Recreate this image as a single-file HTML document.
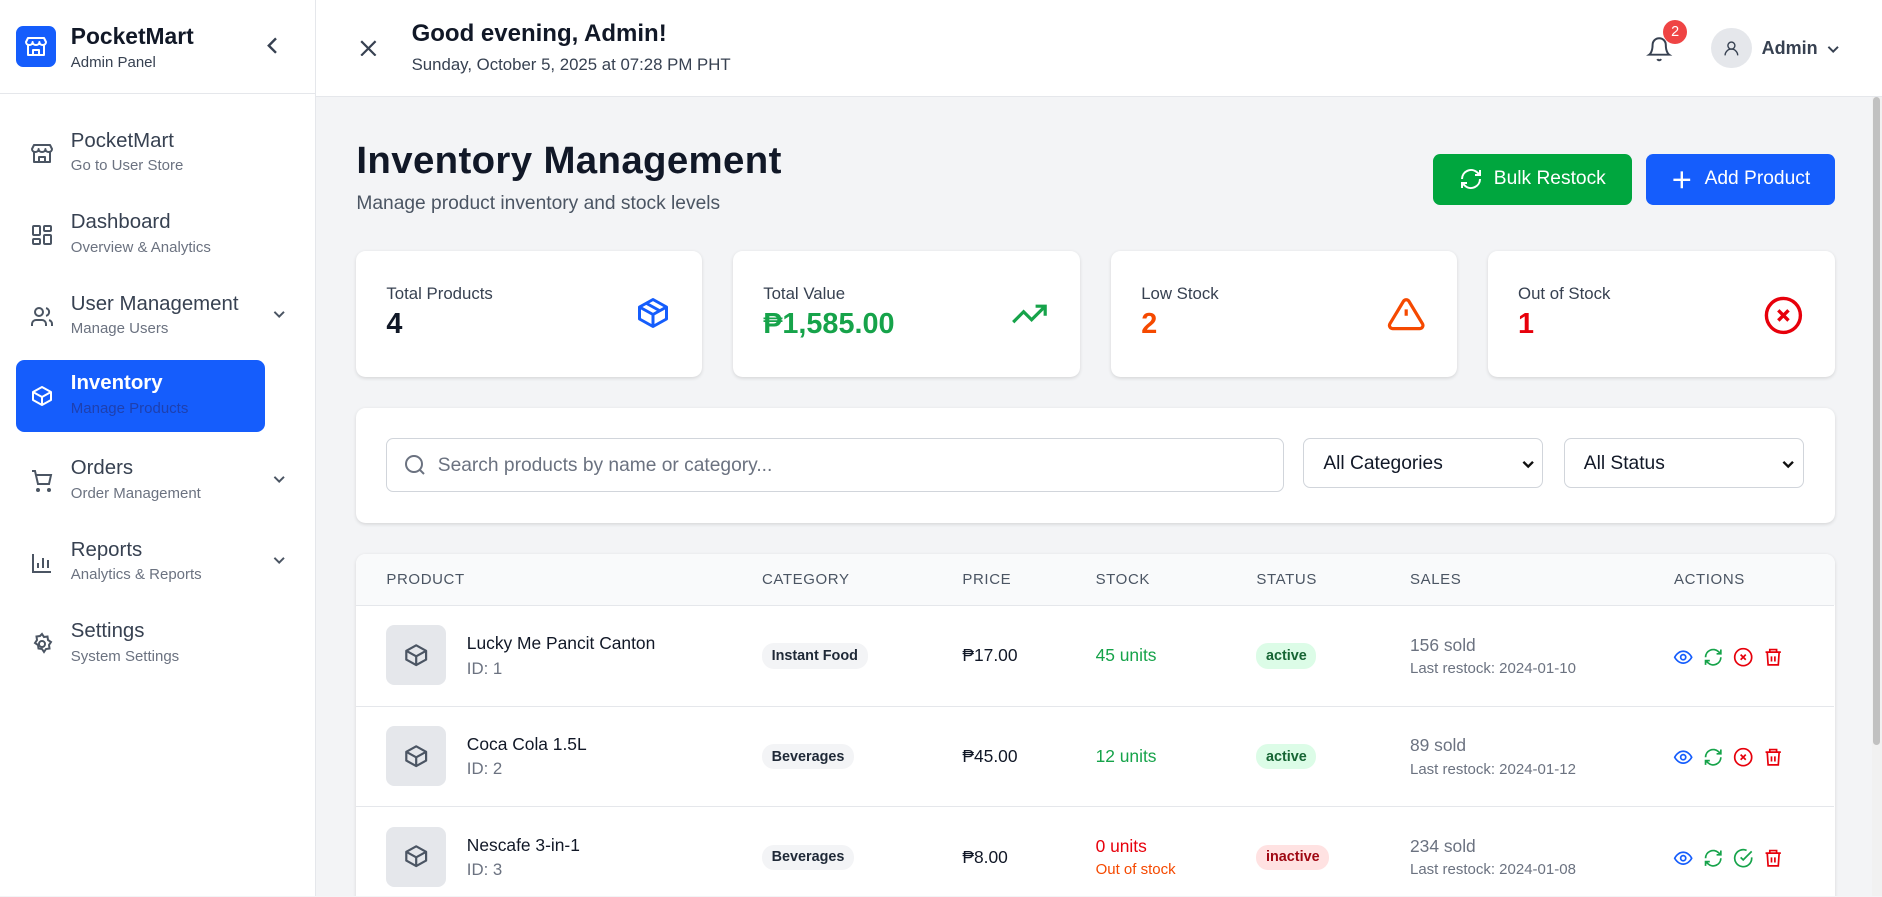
<!DOCTYPE html>
<html><head><meta charset="utf-8"><style>
*{box-sizing:border-box;margin:0;padding:0}
html,body{width:1882px;height:897px;overflow:hidden}
body{font-family:"Liberation Sans",sans-serif;background:#f3f4f6;color:#111827}
#z{zoom:1.2;width:1568px;height:747px;position:relative;overflow:hidden}
.sb{position:absolute;left:0;top:0;width:263px;height:747px;background:#fff;border-right:1px solid #e5e7eb}
.logo{height:78px;border-bottom:1px solid #e5e7eb;position:relative}
.lbox{position:absolute;left:13px;top:22px;width:34px;height:34px;background:#155dfc;border-radius:6px;display:flex;align-items:center;justify-content:center}
.nav{position:absolute;left:13px;width:208px;height:60px;border-radius:7px}
.nav svg{position:absolute;left:12px;top:20px}
.nav .t{position:absolute;left:46px;top:10px;font-size:17px;color:#374151}
.nav .s{position:absolute;left:46px;top:33px;font-size:12.5px;color:#6b7280}
.nav .c{position:absolute;left:214px;top:24px}
.hd{position:absolute;left:263px;top:0;right:0;height:81px;background:#fff;border-bottom:1px solid #e5e7eb}
.card{position:absolute;background:#fff;border-radius:8px;box-shadow:0 1px 3px rgba(0,0,0,.12);}
.sc .l{position:absolute;left:25px;top:28px;font-size:14px;color:#374151}
.sc .v{position:absolute;left:25px;top:48px;font-size:24px;font-weight:bold}
.sc svg{position:absolute;right:26px;top:37px}
.sel{position:absolute;top:25px;height:42px;width:200px;border:1px solid #d1d5db;border-radius:6px;font-size:16px;padding:12px 16px;color:#111827}
.sel svg{position:absolute;right:6px;top:15px}
.row{position:absolute;left:0;width:1231px;height:84px;border-top:1px solid #e5e7eb}
.row>*{position:absolute}
.pi{left:25px;top:16px;width:50px;height:50px;background:#e5e7eb;border-radius:7px;display:flex;align-items:center;justify-content:center}
.pn{left:92px;top:23px;font-size:14.5px}
.pid{left:92px;top:44px;font-size:14px;color:#6b7280}
.cat{left:338px;top:31px;background:#f3f4f6;border-radius:10px;font-size:12px;font-weight:bold;padding:4px 8px;color:#1f2937}
.pr{left:505px;top:33px;font-size:14.5px}
.st{left:616px;top:33px;font-size:14.5px;color:#16a34a}
.bd{left:750px;top:31px;font-size:12px;font-weight:bold;padding:4px 8px;border-radius:10px;background:#dcfce7;color:#166534}
.sl{left:878px;top:24px;font-size:14.5px;color:#6b7280}
.lr{left:878px;top:45px;font-size:12.5px;color:#6b7280}
.ac{left:1097px;top:34px;display:flex;gap:8px}
.th{position:absolute;top:14px;font-size:12.5px;color:#4b5563;letter-spacing:.5px}
</style></head><body><div id="z">
<div class="sb">
 <div class="logo">
  <div class="lbox"><svg width="20" height="20" viewBox="0 0 24 24" fill="none" stroke="#fff" stroke-width="2" stroke-linecap="round" stroke-linejoin="round"><path d="M4 10v10h16V10"/><path d="M2 7l2-4h16l2 4c0 2-1.5 3-3.3 3S15.4 9 15.4 7c0 2-1.5 3-3.4 3S8.6 9 8.6 7c0 2-1.5 3-3.300 3S2 9 2 7z"/><path d="M9 20v-5h6v5"/></svg></div>
  <div style="position:absolute;left:59px;top:19px;font-size:19px;font-weight:bold">PocketMart</div>
  <div style="position:absolute;left:59px;top:45px;font-size:12.5px;color:#374151">Admin Panel</div>
  <svg style="position:absolute;left:220px;top:30px" width="14" height="16" viewBox="0 0 14 16" fill="none" stroke="#374151" stroke-width="2"><path d="M10 2L4 8l6 6"/></svg>
 </div>
 <div class="nav" style="top:98px"><svg width="20" height="20" viewBox="0 0 24 24" fill="none" stroke="#4b5563" stroke-width="2" stroke-linejoin="round"><path d="M4 10v10h16V10"/><path d="M2 7l2-4h16l2 4c0 2-1.5 3-3.3 3S15.4 9 15.4 7c0 2-1.5 3-3.4 3S8.6 9 8.6 7c0 2-1.5 3-3.3 3S2 9 2 7z"/><path d="M9 20v-5h6v5"/></svg><div class="t">PocketMart</div><div class="s">Go to User Store</div></div>
 <div class="nav" style="top:166px"><svg width="20" height="20" viewBox="0 0 24 24" fill="none" stroke="#4b5563" stroke-width="2"><rect x="3" y="3" width="7" height="9" rx="1"/><rect x="14" y="3" width="7" height="5" rx="1"/><rect x="14" y="12" width="7" height="9" rx="1"/><rect x="3" y="16" width="7" height="5" rx="1"/></svg><div class="t">Dashboard</div><div class="s">Overview &amp; Analytics</div></div>
 <div class="nav" style="top:234px"><svg width="20" height="20" viewBox="0 0 24 24" fill="none" stroke="#4b5563" stroke-width="2"><circle cx="9" cy="7" r="4"/><path d="M2 21v-2a4 4 0 014-4h6a4 4 0 014 4v2M16 3.1a4 4 0 010 7.8M22 21v-2a4 4 0 00-3-3.9"/></svg><div class="t">User Management</div><div class="s">Manage Users</div><svg class="c" width="12" height="12" viewBox="0 0 12 12" fill="none" stroke="#4b5563" stroke-width="1.6" style="left:214px;top:22px"><path d="M2 4l4 4 4-4"/></svg></div>
 <div class="nav" style="top:300px;background:#155dfc"><svg width="20" height="20" viewBox="0 0 24 24" fill="none" stroke="#fff" stroke-width="2" stroke-linejoin="round"><path d="M21 8l-9-5-9 5v8l9 5 9-5z"/><path d="M3 8l9 5 9-5M12 13v8"/></svg><div class="t" style="color:#fff;font-weight:bold">Inventory</div><div class="s" style="color:#1e40af">Manage Products</div></div>
 <div class="nav" style="top:371px"><svg width="20" height="20" viewBox="0 0 24 24" fill="none" stroke="#4b5563" stroke-width="2"><circle cx="8" cy="21" r="1"/><circle cx="19" cy="21" r="1"/><path d="M2 2h3l3 13h11l2-9H6"/></svg><div class="t">Orders</div><div class="s">Order Management</div><svg class="c" width="12" height="12" viewBox="0 0 12 12" fill="none" stroke="#4b5563" stroke-width="1.6" style="left:214px;top:22px"><path d="M2 4l4 4 4-4"/></svg></div>
 <div class="nav" style="top:439px"><svg width="20" height="20" viewBox="0 0 24 24" fill="none" stroke="#4b5563" stroke-width="2"><path d="M3 3v18h18M8 17v-5M13 17V7M18 17v-8"/></svg><div class="t">Reports</div><div class="s">Analytics &amp; Reports</div><svg class="c" width="12" height="12" viewBox="0 0 12 12" fill="none" stroke="#4b5563" stroke-width="1.6" style="left:214px;top:22px"><path d="M2 4l4 4 4-4"/></svg></div>
 <div class="nav" style="top:507px"><svg width="20" height="20" viewBox="0 0 24 24" fill="none" stroke="#4b5563" stroke-width="2"><circle cx="12" cy="12" r="3"/><path d="M12 2l2 3 3.5-.5.5 3.5 3 2-2 3 .5 3.5-3.5.5-2 3-2-3-3.5-.5-.5-3.5-3-2 2-3-.5-3.5 3.5-.5z"/></svg><div class="t">Settings</div><div class="s">System Settings</div></div>
</div>
<div class="hd">
 <svg style="position:absolute;left:37px;top:33px" width="14" height="14" viewBox="0 0 14 14" stroke="#374151" stroke-width="1.8"><path d="M1 1l12 12M13 1L1 13"/></svg>
 <div style="position:absolute;left:80px;top:17px;font-size:20px;font-weight:bold">Good evening, Admin!</div>
 <div style="position:absolute;left:80px;top:46px;font-size:14px;color:#374151">Sunday, October 5, 2025 at 07:28 PM PHT</div>
 <svg style="position:absolute;left:1109px;top:30px" width="22" height="22" viewBox="0 0 24 24" fill="none" stroke="#374151" stroke-width="1.8"><path d="M6 8a6 6 0 0112 0c0 7 3 9 3 9H3s3-2 3-9M10.3 21a1.9 1.9 0 003.4 0"/></svg>
 <div style="position:absolute;left:1123px;top:17px;width:20px;height:20px;border-radius:10px;background:#ef4444;color:#fff;font-size:12px;text-align:center;line-height:20px">2</div>
 <div style="position:absolute;left:1163px;top:23px;width:34px;height:34px;border-radius:17px;background:#e5e7eb"><svg style="margin:10px" width="14" height="14" viewBox="0 0 24 24" fill="none" stroke="#374151" stroke-width="2"><circle cx="12" cy="8" r="5"/><path d="M3 22a9 9 0 0118 0"/></svg></div>
 <div style="position:absolute;left:1205px;top:32px;font-size:15px;font-weight:bold;color:#374151">Admin</div>
 <svg style="position:absolute;left:1259px;top:35px" width="12" height="12" viewBox="0 0 12 12" fill="none" stroke="#374151" stroke-width="1.6"><path d="M2 4l4 4 4-4"/></svg>
</div>
<div style="position:absolute;left:1560px;top:81px;width:8px;height:666px;background:#f1f1f1"><div style="margin:0 1px;height:540px;background:#c1c1c1;border-radius:4px"></div></div>
<div style="position:absolute;left:297px;top:116px;font-size:32px;font-weight:bold;letter-spacing:.3px">Inventory Management</div>
<div style="position:absolute;left:297px;top:161px;font-size:16px;color:#4b5563">Manage product inventory and stock levels</div>
<div style="position:absolute;left:1194px;top:128px;width:166px;height:43px;background:#00a63e;border-radius:6px;color:#fff;font-size:16px;display:flex;align-items:center;justify-content:center;gap:9px"><svg width="20" height="20" viewBox="0 0 24 24" fill="none" stroke="#fff" stroke-width="2"><path d="M3 12a9 9 0 0115-6.7L21 8M21 3v5h-5M21 12a9 9 0 01-15 6.7L3 16M3 21v-5h5"/></svg>Bulk Restock</div>
<div style="position:absolute;left:1372px;top:128px;width:157px;height:43px;background:#155dfc;border-radius:6px;color:#fff;font-size:16px;display:flex;align-items:center;justify-content:center;gap:10px"><svg width="18" height="18" viewBox="0 0 18 18" stroke="#fff" stroke-width="2"><path d="M9 2v14M2 9h14"/></svg>Add Product</div>
<div class="card sc" style="left:297px;top:209px;width:288px;height:105px"><div class="l">Total Products</div><div class="v">4</div><svg width="30" height="30" viewBox="0 0 24 24" fill="none" stroke="#155dfc" stroke-width="2" stroke-linejoin="round"><path d="M21 8l-9-5-9 5v8l9 5 9-5z"/><path d="M3 8l9 5 9-5M12 13v8M7.5 5.5l9 5"/></svg></div>
<div class="card sc" style="left:611px;top:209px;width:289px;height:105px"><div class="l">Total Value</div><div class="v" style="color:#16a34a">₱1,585.00</div><svg width="32" height="32" viewBox="0 0 24 24" fill="none" stroke="#16a34a" stroke-width="2"><path d="M22 7l-8.5 8.5-5-5L2 17M16 7h6v6"/></svg></div>
<div class="card sc" style="left:926px;top:209px;width:288px;height:105px"><div class="l">Low Stock</div><div class="v" style="color:#f54900">2</div><svg width="32" height="32" viewBox="0 0 24 24" fill="none" stroke="#f54900" stroke-width="2"><path d="M10.3 3.9L1.8 18a2 2 0 001.7 3h17a2 2 0 001.7-3L13.7 3.9a2 2 0 00-3.4 0zM12 9v4M12 17h.01"/></svg></div>
<div class="card sc" style="left:1240px;top:209px;width:289px;height:105px"><div class="l">Out of Stock</div><div class="v" style="color:#e7000b">1</div><svg width="34" height="34" viewBox="0 0 24 24" fill="none" stroke="#e7000b" stroke-width="2"><circle cx="12" cy="12" r="10"/><path d="M15 9l-6 6M9 9l6 6"/></svg></div>
<div class="card" style="left:297px;top:340px;width:1232px;height:96px">
 <div style="position:absolute;left:25px;top:25px;width:748px;height:45px;border:1px solid #d1d5db;border-radius:6px"><svg style="position:absolute;left:13px;top:12px" width="20" height="20" viewBox="0 0 24 24" fill="none" stroke="#6b7280" stroke-width="2"><circle cx="11" cy="11" r="8"/><path d="M21 21l-4.3-4.3"/></svg><div style="position:absolute;left:42px;top:13px;font-size:16px;color:#6b7280">Search products by name or category...</div></div>
 <div class="sel" style="left:789px">All Categories<svg width="12" height="12" viewBox="0 0 12 12" fill="none" stroke="#111" stroke-width="2"><path d="M2 4l4 4 4-4"/></svg></div>
 <div class="sel" style="left:1006px">All Status<svg width="12" height="12" viewBox="0 0 12 12" fill="none" stroke="#111" stroke-width="2"><path d="M2 4l4 4 4-4"/></svg></div>
</div>
<div class="card" style="left:297px;top:462px;width:1232px;height:300px;overflow:hidden">
 <div style="height:42px;background:#f9fafb;position:relative">
  <div class="th" style="left:25px">PRODUCT</div><div class="th" style="left:338px">CATEGORY</div><div class="th" style="left:505px">PRICE</div><div class="th" style="left:616px">STOCK</div><div class="th" style="left:750px">STATUS</div><div class="th" style="left:878px">SALES</div><div class="th" style="left:1098px">ACTIONS</div>
 </div>
 <div class="row" style="top:42px"><div class="pi"><svg width="22" height="22" viewBox="0 0 24 24" fill="none" stroke="#4b5563" stroke-width="2" stroke-linejoin="round"><path d="M21 8l-9-5-9 5v8l9 5 9-5z"/><path d="M3 8l9 5 9-5M12 13v8"/></svg></div><div class="pn">Lucky Me Pancit Canton</div><div class="pid">ID: 1</div><div class="cat">Instant Food</div><div class="pr">₱17.00</div><div class="st">45 units</div><div class="bd">active</div><div class="sl">156 sold</div><div class="lr">Last restock: 2024-01-10</div><div class="ac">I1</div></div>
 <div class="row" style="top:126px"><div class="pi"><svg width="22" height="22" viewBox="0 0 24 24" fill="none" stroke="#4b5563" stroke-width="2" stroke-linejoin="round"><path d="M21 8l-9-5-9 5v8l9 5 9-5z"/><path d="M3 8l9 5 9-5M12 13v8"/></svg></div><div class="pn">Coca Cola 1.5L</div><div class="pid">ID: 2</div><div class="cat">Beverages</div><div class="pr">₱45.00</div><div class="st">12 units</div><div class="bd">active</div><div class="sl">89 sold</div><div class="lr">Last restock: 2024-01-12</div><div class="ac">I1</div></div>
 <div class="row" style="top:210px"><div class="pi"><svg width="22" height="22" viewBox="0 0 24 24" fill="none" stroke="#4b5563" stroke-width="2" stroke-linejoin="round"><path d="M21 8l-9-5-9 5v8l9 5 9-5z"/><path d="M3 8l9 5 9-5M12 13v8"/></svg></div><div class="pn">Nescafe 3-in-1</div><div class="pid">ID: 3</div><div class="cat">Beverages</div><div class="pr">₱8.00</div><div class="st" style="color:#e7000b;top:24px">0 units</div><div style="left:616px;top:45px;font-size:12.5px;color:#f54900">Out of stock</div><div class="bd" style="background:#ffe2e2;color:#9f0712">inactive</div><div class="sl">234 sold</div><div class="lr">Last restock: 2024-01-08</div><div class="ac">I2</div></div>
</div>
</div>
<script>
var eye='<svg width="17" height="17" viewBox="0 0 24 24" fill="none" stroke="#155dfc" stroke-width="2"><path d="M2 12s3.5-7 10-7 10 7 10 7-3.5 7-10 7S2 12 2 12z"/><circle cx="12" cy="12" r="3"/></svg>';
var rf='<svg width="17" height="17" viewBox="0 0 24 24" fill="none" stroke="#16a34a" stroke-width="2"><path d="M3 12a9 9 0 0115-6.7L21 8M21 3v5h-5M21 12a9 9 0 01-15 6.7L3 16M3 21v-5h5"/></svg>';
var x='<svg width="17" height="17" viewBox="0 0 24 24" fill="none" stroke="#e7000b" stroke-width="2"><circle cx="12" cy="12" r="10"/><path d="M15 9l-6 6M9 9l6 6"/></svg>';
var ok='<svg width="17" height="17" viewBox="0 0 24 24" fill="none" stroke="#16a34a" stroke-width="2"><path d="M22 11v1a10 10 0 11-6-9.2"/><path d="M22 4L12 14l-3-3"/></svg>';
var tr='<svg width="17" height="17" viewBox="0 0 24 24" fill="none" stroke="#e7000b" stroke-width="2"><path d="M3 6h18M8 6V3h8v3M5 6l1 15h12l1-15M10 11v6M14 11v6"/></svg>';
document.querySelectorAll('.ac').forEach(function(e){e.innerHTML=eye+rf+(e.textContent=='I1'?x:ok)+tr;});
</script>
</body></html>
